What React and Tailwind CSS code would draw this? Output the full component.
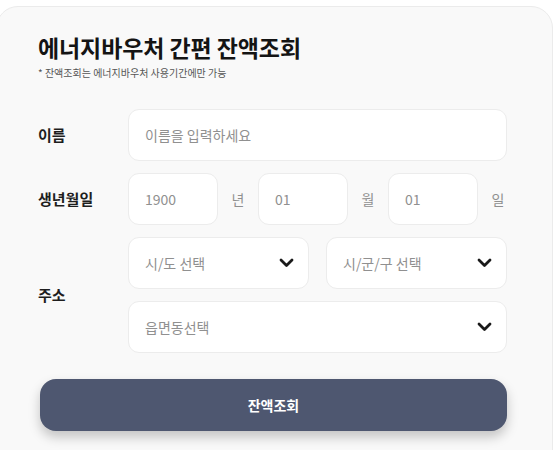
import React from "react";

const font = { fontFamily: '"Noto Sans CJK KR", "Noto Sans", sans-serif' };

function Chevron() {
  return (
    <svg width="15" height="10" viewBox="0 0 15 10" fill="none">
      <path d="M2 2 L7.5 7.5 L13 2" stroke="#1a1a1a" strokeWidth="2.8" strokeLinecap="round" strokeLinejoin="round" />
    </svg>
  );
}

function Box({ children, className = "" }) {
  return (
    <div className={"h-[52px] rounded-[11px] border border-[#ececec] bg-white flex items-center pl-[16px] text-[14px] text-[#909090] " + className}>
      {children}
    </div>
  );
}

function Select({ label, className = "" }) {
  return (
    <Box className={"justify-between pr-[14px] " + className}>
      <span>{label}</span>
      <Chevron />
    </Box>
  );
}

export default function App() {
  return (
    <div className="w-[556px] h-[450px] overflow-hidden bg-white pt-[6px]" style={font}>
      <div className="ml-[-4px] w-[557px] h-[470px] rounded-[22px] border border-[#ebebeb] bg-[#f9f9f9] pl-[41px] pr-[45px] pt-[26px]">
        <div className="text-[23px] font-bold leading-[28px] text-[#141414] tracking-[-0.1px]">에너지바우처 간편 잔액조회</div>
        <div className="text-[10px] leading-[14px] text-[#555] mt-[5px]">* 잔액조회는 에너지바우처 사용기간에만 가능</div>

        <div className="mt-[29px] flex flex-col gap-[12px]">
          <div className="flex items-center">
            <div className="w-[90px] shrink-0 text-[15px] font-bold text-[#1e1e1e]">이름</div>
            <Box className="flex-1">이름을 입력하세요</Box>
          </div>

          <div className="flex items-center">
            <div className="w-[90px] shrink-0 text-[15px] font-bold text-[#1e1e1e]">생년월일</div>
            <Box className="w-[90px] shrink-0">1900</Box>
            <span className="w-[40px] shrink-0 text-center text-[14px] text-[#909090]">년</span>
            <Box className="w-[90px] shrink-0">01</Box>
            <span className="w-[40px] shrink-0 text-center text-[14px] text-[#909090]">월</span>
            <Box className="w-[90px] shrink-0">01</Box>
            <span className="w-[40px] shrink-0 text-center text-[14px] text-[#909090]">일</span>
          </div>

          <div className="flex items-center">
            <div className="w-[90px] shrink-0 text-[15px] font-bold text-[#1e1e1e]">주소</div>
            <div className="flex-1 flex flex-col gap-[12px]">
              <div className="grid grid-cols-2 gap-[17px]">
                <Select label="시/도 선택" />
                <Select label="시/군/구 선택" />
              </div>
              <Select label="읍면동선택" />
            </div>
          </div>
        </div>

        <button className="mt-[26px] ml-[2px] w-[467px] h-[52px] rounded-[16px] bg-[#4e5770] text-white text-[14px] font-bold shadow-[0_6px_12px_rgba(0,0,0,0.22)]">
          잔액조회
        </button>
      </div>
    </div>
  );
}
